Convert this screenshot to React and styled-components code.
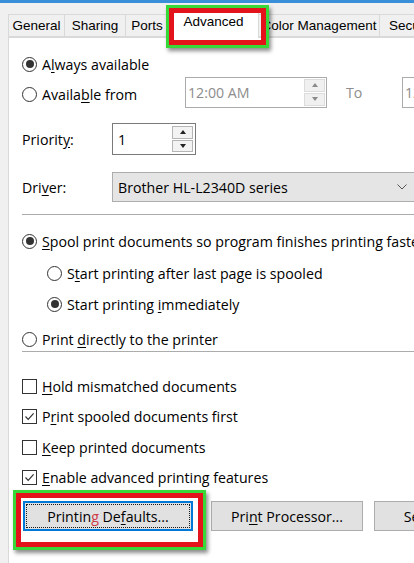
import React from 'react';
import styled, { createGlobalStyle } from 'styled-components';

const GlobalStyle = createGlobalStyle`
  html, body { margin: 0; padding: 0; background: #f0f0f0; }
  body { font-family: 'Open Sans', 'Noto Sans', sans-serif; }
`;

const Window = styled.div`
  position: relative;
  width: 414px;
  height: 563px;
  overflow: hidden;
  box-sizing: border-box;
  background: #f0f0f0;
  border-top: 3px solid #3a8fd9;
  display: flex;
  flex-direction: column;
`;

const TabStrip = styled.div`
  display: flex;
  align-items: flex-end;
  height: 34px;
  padding-left: 9px;
  flex-shrink: 0;
`;

const Tab = styled.div`
  box-sizing: border-box;
  flex-shrink: 0;
  width: ${p => p.$w}px;
  height: ${p => (p.$active ? 30 : 23)}px;
  margin-left: -1px;
  margin-bottom: ${p => (p.$active ? -1 : 0)}px;
  padding: 0 ${p => (p.$start ? 9 : 0)}px ${p => (p.$active ? 5 : 1)}px;
  background: ${p => (p.$active ? '#fff' : '#f0f0f0')};
  border: 1px solid #d9d9d9;
  border-bottom: ${p => (p.$active ? 'none' : '1px solid #d9d9d9')};
  display: flex;
  align-items: center;
  justify-content: ${p => (p.$start ? 'flex-start' : 'center')};
  font: 13.5px 'Liberation Sans', Arial, sans-serif;
  color: #000;
  white-space: nowrap;
  z-index: ${p => (p.$active ? 1 : 0)};
`;

const Panel = styled.div`
  flex: 1;
  margin-left: 8px;
  background: #fff;
  border-left: 1px solid #d9d9d9;
  border-top: 1px solid #d9d9d9;
  padding-left: 13px;
  display: flex;
  flex-direction: column;
  font-size: 14.2px;
  color: #000;
`;

const Option = styled.label`
  display: flex;
  align-items: center;
  gap: 5px;
  height: 20px;
  flex-shrink: 0;
  white-space: nowrap;
  margin-top: ${p => p.$mt || 0}px;
  margin-left: ${p => p.$indent || 0}px;
  width: ${p => (p.$w ? `${p.$w}px` : 'auto')};
  padding-top: ${p => p.$down || 0}px;
`;

const Radio = styled.span`
  box-sizing: border-box;
  width: 15px;
  height: 15px;
  border: 1px solid #333;
  border-radius: 50%;
  flex-shrink: 0;
  display: flex;
  align-items: center;
  justify-content: center;

  &::after {
    content: '';
    width: 8px;
    height: 8px;
    border-radius: 50%;
    background: ${p => (p.$on ? '#333' : 'transparent')};
  }
`;

const Check = styled.span`
  box-sizing: border-box;
  width: 15px;
  height: 15px;
  border: 1px solid #333;
  flex-shrink: 0;
  display: flex;
  align-items: center;
  justify-content: center;
`;

const Key = styled.span`
  text-decoration: underline;
  text-underline-offset: 2px;
`;

const FieldRow = styled.div`
  display: flex;
  align-items: center;
  flex-shrink: 0;
  height: ${p => p.$h}px;
  margin-top: ${p => p.$mt}px;
`;

const FieldLabel = styled.span`
  width: 90px;
  flex-shrink: 0;
`;

const TimeBox = styled.div`
  box-sizing: border-box;
  width: 142px;
  height: 31px;
  flex-shrink: 0;
  border: 1px solid #ababab;
  background: #fff;
  display: flex;
  align-items: center;
  justify-content: space-between;
  padding: 1px 1px 1px 2px;
  color: #8d8d8d;
`;

const ToLabel = styled.span`
  width: 56px;
  margin-left: 19px;
  flex-shrink: 0;
  color: #8d8d8d;
`;

const SpinBox = styled.div`
  box-sizing: border-box;
  width: 84px;
  height: 32px;
  flex-shrink: 0;
  border: 1px solid #7a7a7a;
  background: #fff;
  display: flex;
  align-items: center;
  justify-content: space-between;
  padding: 2px 2px 2px 5px;
`;

const Spinner = styled.div`
  display: flex;
  flex-direction: column;
  width: 21px;
  align-self: stretch;
  gap: 1px;
`;

const SpinBtn = styled.div`
  flex: 1;
  box-sizing: border-box;
  border: 1px solid ${p => (p.$off ? '#dcdcdc' : '#b5b5b5')};
  background: ${p => (p.$off ? '#f0f0f0' : '#f3f3f3')};
  display: flex;
  align-items: center;
  justify-content: center;

  &::after {
    content: '';
    width: 0;
    height: 0;
    border-left: 3.5px solid transparent;
    border-right: 3.5px solid transparent;
    ${p => (p.$down ? 'border-top' : 'border-bottom')}: 4px solid ${p => (p.$off ? '#8a8a8a' : '#222')};
  }
`;

const Select = styled.div`
  box-sizing: border-box;
  width: 312px;
  height: 30px;
  flex-shrink: 0;
  border: 1px solid #adadad;
  background: #e5e5e5;
  display: flex;
  align-items: center;
  justify-content: space-between;
  padding: 0 16px 0 5px;
`;

const Separator = styled.div`
  height: 1px;
  flex-shrink: 0;
  background: #acacac;
  margin-top: ${p => p.$mt}px;
`;

const CheckList = styled.div`
  display: flex;
  flex-direction: column;
  gap: 10.5px;
  margin-top: 24px;
`;

const ButtonRow = styled.div`
  display: flex;
  margin-top: 13.5px;
  flex-shrink: 0;
`;

const Button = styled.div`
  position: relative;
  box-sizing: border-box;
  width: ${p => p.$w}px;
  height: 30px;
  flex-shrink: 0;
  margin-left: ${p => p.$ml}px;
  background: #e1e1e1;
  border: 1px solid ${p => (p.$focus ? '#0078d7' : '#adadad')};
  box-shadow: ${p => (p.$focus ? 'inset 0 0 0 1px #0078d7' : 'none')};
  display: flex;
  align-items: center;
  justify-content: center;
  white-space: nowrap;

  &::after {
    content: '';
    position: absolute;
    inset: 2px;
    border: 1px dotted ${p => (p.$focus ? '#1a1a1a' : 'transparent')};
  }
`;

const Tinted = styled.span`
  color: #cf3a47;
`;

const Callout = styled.div`
  position: absolute;
  box-sizing: border-box;
  left: ${p => p.$x}px;
  top: ${p => p.$y}px;
  width: ${p => p.$w}px;
  height: ${p => p.$h}px;
  border: 3px solid #38d838;
  box-shadow: 2px 3px 4px rgba(0, 0, 0, 0.45);
  z-index: 5;
  pointer-events: none;

  &::before {
    content: '';
    position: absolute;
    inset: 0;
    border: 5px solid #e4121b;
  }
`;

function CheckMark() {
  return (
    <svg width="11" height="11" viewBox="0 0 11 11">
      <polyline points="1.5,5.5 4.2,8.3 9.6,2.4" fill="none" stroke="#333" strokeWidth="1.2" />
    </svg>
  );
}

function Chevron() {
  return (
    <svg width="10" height="6" viewBox="0 0 10 6">
      <polyline points="0.5,0.5 5,5 9.5,0.5" fill="none" stroke="#555" strokeWidth="1" />
    </svg>
  );
}

export default function App() {
  return (
    <>
      <GlobalStyle />
      <Window>
        <TabStrip>
          <Tab $w={57}>General</Tab>
          <Tab $w={62}>Sharing</Tab>
          <Tab $w={44}>Ports</Tab>
          <Tab $w={91} $active>Advanced</Tab>
          <Tab $w={122}>Color Management</Tab>
          <Tab $w={80} $start>Security</Tab>
        </TabStrip>

        <Panel>
          <Option $mt={16}>
            <Radio $on />
            <span>A<Key>l</Key>ways available</span>
          </Option>

          <FieldRow $h={32} $mt={2}>
            <Option $w={163} $down={5}>
              <Radio />
              <span>Availa<Key>b</Key>le from</span>
            </Option>
            <TimeBox>
              <span>12:00 AM</span>
              <Spinner>
                <SpinBtn $off />
                <SpinBtn $off $down />
              </Spinner>
            </TimeBox>
            <ToLabel>To</ToLabel>
            <TimeBox>
              <span>12:00 AM</span>
            </TimeBox>
          </FieldRow>

          <FieldRow $h={32} $mt={15}>
            <FieldLabel>Priorit<Key>y</Key>:</FieldLabel>
            <SpinBox>
              <span>1</span>
              <Spinner>
                <SpinBtn />
                <SpinBtn $down />
              </Spinner>
            </SpinBox>
          </FieldRow>

          <FieldRow $h={30} $mt={17}>
            <FieldLabel>Dri<Key>v</Key>er:</FieldLabel>
            <Select>
              <span>Brother HL-L2340D series</span>
              <Chevron />
            </Select>
          </FieldRow>

          <Separator $mt={12} />

          <Option $mt={16}>
            <Radio $on />
            <span><Key>S</Key>pool print documents so program finishes printing faster</span>
          </Option>
          <Option $mt={12} $indent={25}>
            <Radio />
            <span>S<Key>t</Key>art printing after last page is spooled</span>
          </Option>
          <Option $mt={11} $indent={25}>
            <Radio $on />
            <span>Start printing <Key>i</Key>mmediately</span>
          </Option>
          <Option $mt={15}>
            <Radio />
            <span>Print <Key>d</Key>irectly to the printer</span>
          </Option>

          <Separator $mt={2} />

          <CheckList>
            <Option>
              <Check />
              <span><Key>H</Key>old mismatched documents</span>
            </Option>
            <Option>
              <Check><CheckMark /></Check>
              <span>P<Key>r</Key>int spooled documents first</span>
            </Option>
            <Option>
              <Check />
              <span><Key>K</Key>eep printed documents</span>
            </Option>
            <Option>
              <Check><CheckMark /></Check>
              <span><Key>E</Key>nable advanced printing features</span>
            </Option>
          </CheckList>

          <ButtonRow>
            <Button $w={170} $ml={1} $focus>
              <span>Printin<Tinted>g</Tinted> De<Key>f</Key>aults...</span>
            </Button>
            <Button $w={152} $ml={18}>
              <span>Pri<Key>n</Key>t Processor...</span>
            </Button>
            <Button $w={172} $ml={11}>
              <span>Separator Page...</span>
            </Button>
          </ButtonRow>
        </Panel>

        <Callout $x={166} $y={2} $w={103} $h={43} />
        <Callout $x={13} $y={487} $w={193} $h={60} />
      </Window>
    </>
  );
}
